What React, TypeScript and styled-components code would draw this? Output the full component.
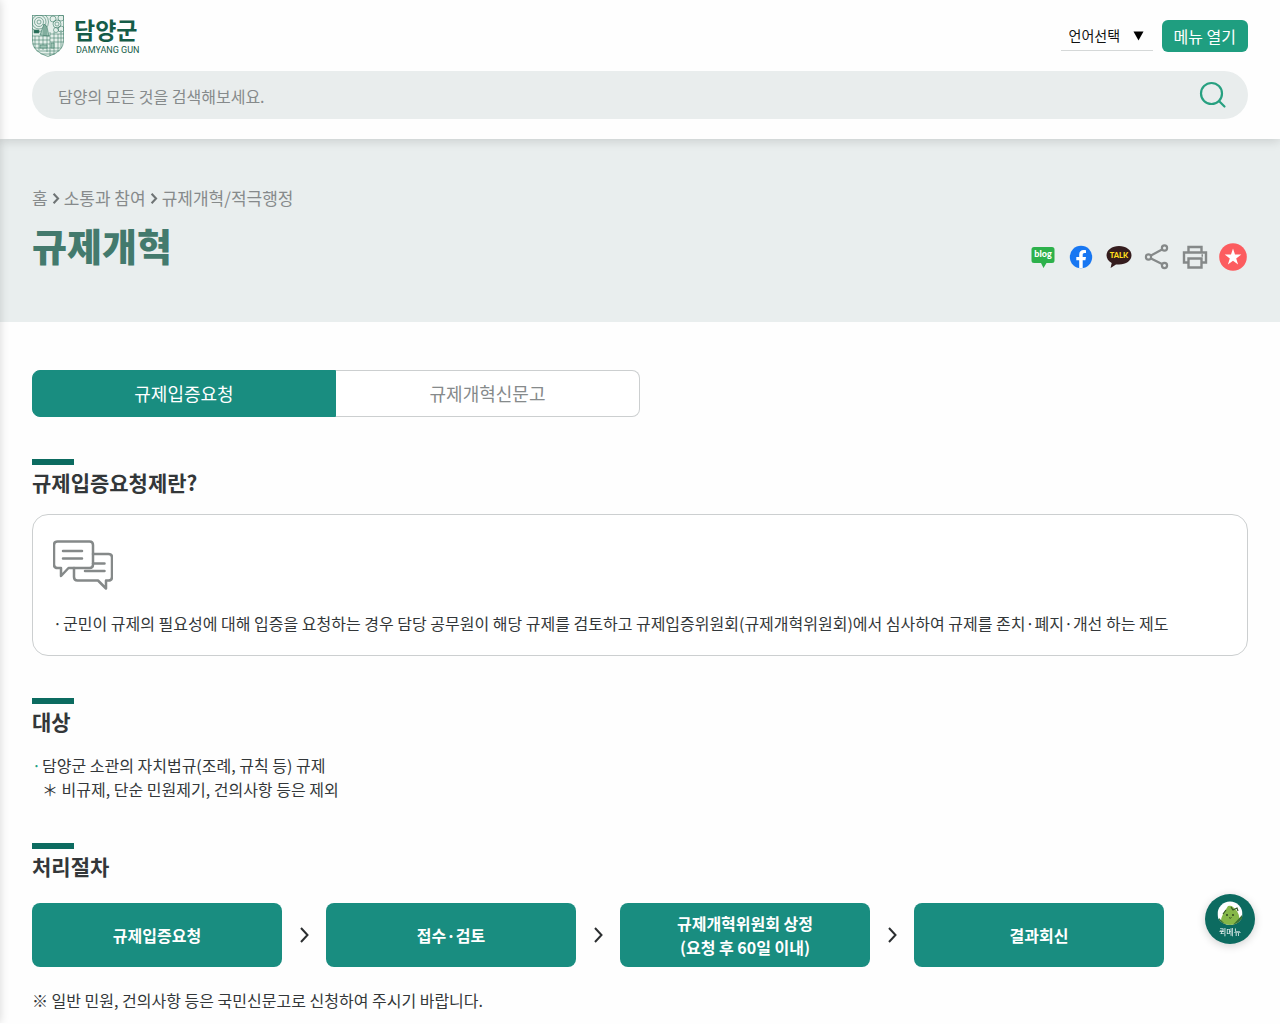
import React from "react";
import styled, { createGlobalStyle } from "styled-components";

const color = {
  teal: "#198d80",
  deep: "#0c6b60",
  button: "#1f9e80",
  mist: "#e9eeee",
  text: "#333739",
  muted: "#868a8b",
  line: "#cccfd0",
};

const GlobalStyle = createGlobalStyle`
  *, *::before, *::after { box-sizing: border-box; }
  body {
    margin: 0;
    background: #fefefe;
    color: ${color.text};
    font-family: "Noto Sans CJK KR", "Noto Sans", sans-serif;
    font-size: 16px;
    line-height: 24px;
  }
  h1, h2, p, ul, ol { margin: 0; padding: 0; }
  ul, ol { list-style: none; }
  a { color: inherit; text-decoration: none; }
  button, input, select { font-family: inherit; }
  svg { display: block; }
`;

const Page = styled.div`
  position: relative;
  overflow: hidden;
`;

const DrawerEdge = styled.div`
  position: absolute;
  z-index: 5;
  top: 0;
  bottom: 0;
  left: -10px;
  width: 10px;
  box-shadow: 0 0 10px rgba(0, 0, 0, 0.16);
`;

const Header = styled.header`
  position: relative;
  z-index: 2;
  display: flex;
  flex-direction: column;
  gap: 14px;
  padding: 15px 32px 20px;
  background: #fefefe;
  box-shadow: 0 2px 10px rgba(0, 0, 0, 0.14);
`;

const TopRow = styled.div`
  display: flex;
  align-items: center;
  justify-content: space-between;
`;

const Logo = styled.a`
  display: flex;
  align-items: center;
  gap: 10px;
  color: #155c48;
`;

const LogoText = styled.span`
  display: flex;
  flex-direction: column;
`;

const LogoName = styled.strong`
  font-size: 23px;
  line-height: 27px;
  font-weight: 700;
`;

const LogoLatin = styled.span`
  padding-left: 2px;
  font-family: Roboto, sans-serif;
  font-size: 9px;
  line-height: 14px;
`;

const Tools = styled.div`
  display: flex;
  align-items: center;
  gap: 9px;
`;

const LanguageBox = styled.label`
  display: grid;
  grid-template-columns: 1fr;
  align-items: center;
  width: 92px;
  height: 30px;
  border-bottom: 1px solid #d5d8d8;

  > * { grid-area: 1 / 1; }
  > svg { justify-self: end; margin-right: 9px; pointer-events: none; }
`;

const LanguageSelect = styled.select`
  appearance: none;
  width: 100%;
  padding: 0 8px 2px;
  border: 0;
  background: transparent;
  color: #111;
  font-size: 14px;
  line-height: 24px;
`;

const MenuButton = styled.button`
  height: 32px;
  padding: 0 12px;
  border: 0;
  border-radius: 6px;
  background: ${color.button};
  color: #fff;
  font-size: 16px;
  line-height: 24px;
`;

const SearchBar = styled.form`
  display: flex;
  align-items: center;
  height: 48px;
  padding: 0 21px 0 26px;
  border-radius: 24px;
  background: #e9eded;
`;

const SearchInput = styled.input`
  flex: 1;
  min-width: 0;
  padding: 2px 0 0;
  border: 0;
  outline: 0;
  background: transparent;
  color: ${color.text};
  font-size: 16px;
  line-height: 24px;

  &::placeholder { color: ${color.muted}; opacity: 1; }
`;

const IconButton = styled.button`
  display: grid;
  place-items: center;
  width: 28px;
  height: 28px;
  padding: 0;
  border: 0;
  background: transparent;
`;

const Banner = styled.div`
  padding: 47px 32px 51px;
  background: ${color.mist};
`;

const Breadcrumb = styled.nav`
  display: flex;
  align-items: center;
  gap: 4px;
  color: ${color.muted};
  font-size: 17px;
  line-height: 24px;
`;

const BannerRow = styled.div`
  display: flex;
  align-items: flex-end;
  justify-content: space-between;
  padding: 9px 1px 0 0;
`;

const PageTitle = styled.h1`
  color: #437a6d;
  font-size: 38px;
  line-height: 52px;
  font-weight: 900;
`;

const ShareList = styled.ul`
  display: flex;
  gap: 10px;
`;

const Main = styled.main`
  display: flex;
  flex-direction: column;
  gap: 42px;
  padding: 48px 32px 11px;
`;

const Tabs = styled.nav`
  display: grid;
  grid-template-columns: 1fr 1fr;
  width: 50%;
`;

const Tab = styled.a<{ $active?: boolean }>`
  padding: 10px 0 11px;
  border: 1px solid ${(p) => (p.$active ? color.teal : color.line)};
  border-left-width: ${(p) => (p.$active ? "1px" : "0")};
  border-radius: ${(p) => (p.$active ? "8px 0 0 8px" : "0 8px 8px 0")};
  background: ${(p) => (p.$active ? color.teal : "#fff")};
  color: ${(p) => (p.$active ? "#fff" : color.muted)};
  font-size: 18px;
  line-height: 24px;
  text-align: center;
`;

const SectionTitle = styled.h2`
  margin-bottom: 15px;
  font-size: 21px;
  line-height: 34px;
  font-weight: 700;

  &::before {
    content: "";
    display: block;
    width: 42px;
    height: 6px;
    background: ${color.deep};
  }
`;

const InfoBox = styled.div`
  display: flex;
  flex-direction: column;
  gap: 16px;
  padding: 20px;
  border: 1px solid ${color.line};
  border-radius: 16px;
  background: #fff;
`;

const BulletItem = styled.li<{ $dot?: string }>`
  display: flex;

  &::before {
    content: "·";
    flex: none;
    width: 10px;
    color: ${(p) => p.$dot || "inherit"};
  }
`;

const Steps = styled.ol`
  display: flex;
  align-items: center;
  padding-top: 5px;
`;

const Step = styled.li`
  display: flex;
  align-items: center;
`;

const StepCard = styled.div`
  display: grid;
  place-items: center;
  width: 250px;
  height: 64px;
  border-radius: 8px;
  background: ${color.teal};
  color: #fff;
  font-weight: 700;
  text-align: center;
`;

const StepArrow = styled.span`
  display: grid;
  place-items: center;
  width: 44px;
`;

const Note = styled.p`
  margin-top: 21px;
`;

const QuickMenu = styled.button`
  position: fixed;
  z-index: 6;
  top: 894px;
  right: 25px;
  display: flex;
  flex-direction: column;
  align-items: center;
  width: 50px;
  height: 50px;
  padding: 7px 0 0;
  border: 0;
  border-radius: 50%;
  background: ${color.deep};
  box-shadow: 0 2px 8px rgba(0, 0, 0, 0.18);
  color: #fff;
  font-size: 8px;
  line-height: 10px;
`;

const Shield = () => (
  <svg width="32" height="42" viewBox="0 0 32 42" fill="none" stroke="#3f7d6a" strokeWidth="0.6" aria-hidden="true">
    <clipPath id="shield">
      <path d="M0 0h32v26q0 11-16 16Q0 37 0 26z" />
    </clipPath>
    <g clipPath="url(#shield)">
      <path d="M0 0h32v42H0z" fill="#e4efea" stroke="none" />
      <circle cx="7" cy="7" r="2" /><circle cx="7" cy="7" r="4.5" /><circle cx="7" cy="7" r="7" /><circle cx="7" cy="7" r="9.5" />
      <circle cx="25" cy="9" r="2" /><circle cx="25" cy="9" r="4" /><circle cx="21" cy="4" r="3" /><circle cx="29" cy="3" r="3" /><circle cx="29" cy="14" r="3" /><circle cx="24" cy="15" r="2.5" />
      <path d="M8 20l4-11 3 3 2 9zM12 9v12M14 10v11" fill="#9fc3b5" />
      <path d="M2 15h5v3H2z" fill="#236a55" />
      <path d="M0 21h18M0 25h18M0 29h18M3 21v12M7 21v14M11 21v14M15 21v16M18 17v24M22 17v24M18 19h14M18 23h14M18 27h14M26 19v17M29 15v17M0 33h32M4 36h24M8 39h18" />
      <path d="M19 28h3v5h-3zM8 30h7v3H8z" fill="#9fc3b5" />
    </g>
    <path d="M.5.5h31V26q0 10.500-15.500 15.500Q.5 36.500.5 26z" />
  </svg>
);

const SearchIcon = () => (
  <svg width="28" height="28" viewBox="0 0 28 28" fill="none" stroke="#27a080" strokeWidth="2.2" strokeLinecap="round" aria-hidden="true">
    <circle cx="12.500" cy="12.500" r="10.500" />
    <path d="M20 20l5.500 5.500" />
  </svg>
);

const Chevron = ({ width, height, stroke, weight = 2 }: { width: number; height: number; stroke: string; weight?: number }) => (
  <svg width={width} height={height} viewBox="0 0 9 16" fill="none" stroke={stroke} strokeWidth={weight} aria-hidden="true">
    <path d="M1 1l6.500 7L1 15" />
  </svg>
);

const ChatIcon = () => (
  <svg width="60" height="60" viewBox="0 0 60 60" fill="none" stroke="#858989" strokeWidth="2.500" strokeLinecap="round" strokeLinejoin="round" aria-hidden="true">
    <path d="M4.500 6.500h32q3.500 0 3.500 3.500v19.500q0 3.500-3.500 3.500H15.500L8 41v-8H4.500Q1 33 1 29.500V10q0-3.500 3.500-3.500z" />
    <path d="M10 16h19M10 23.500h19" />
    <path d="M40 19h15.500q3.500 0 3.500 3.500v19.500q0 3.500-3.500 3.500H53v8L45 45.500H24.500Q21 45.500 21 42v-9M40 28.500h11.500M32 36h19.500" />
  </svg>
);

const BlogIcon = () => (
  <svg width="28" height="28" viewBox="0 0 28 28" aria-hidden="true">
    <path d="M5 4h18q2.500 0 2.500 2.500v11q0 2.500-2.500 2.500h-5.500L14.500 25l-2.500-5H5q-2.500 0-2.500-2.500v-11Q2.500 4 5 4z" fill="#2db14b" />
    <text x="14" y="14" textAnchor="middle" fontFamily="Lato, sans-serif" fontSize="9" fontWeight="900" fill="#fff">blog</text>
  </svg>
);

const FacebookIcon = () => (
  <svg width="28" height="28" viewBox="0 0 28 28" aria-hidden="true">
    <circle cx="14" cy="14" r="11.200" fill="#1877f2" />
    <path d="M12.200 25v-7.700H9.300V14h2.900v-2.500c0-3 1.800-4.500 4.400-4.500 1.200 0 2.400.2 2.400.2V10h-1.400c-1.400 0-1.900.8-1.900 1.700V14h3.300l-.6 3.300h-2.700V25z" fill="#fff" />
  </svg>
);

const TalkIcon = () => (
  <svg width="28" height="28" viewBox="0 0 28 28" aria-hidden="true">
    <path d="M14 3C7 3 1.500 7 1.500 12.300c0 3.200 2 6 5.200 7.700L5.600 25l5.400-3.600c1 .2 2 .2 3 .2 7 0 12.500-4 12.500-9.300S21 3 14 3z" fill="#351d1e" />
    <text x="14" y="15" textAnchor="middle" fontFamily="Lato, sans-serif" fontSize="7.500" fontWeight="900" fill="#ffdf1c">TALK</text>
  </svg>
);

const ShareIcon = () => (
  <svg width="28" height="28" viewBox="0 0 28 28" fill="none" stroke="#858989" strokeWidth="2.200" aria-hidden="true">
    <circle cx="5.500" cy="14" r="2.600" /><circle cx="21.500" cy="5" r="2.600" /><circle cx="21.500" cy="22.500" r="2.600" />
    <path d="M8 12.500l11-6M8 15.500l11 5.500" />
  </svg>
);

const PrintIcon = () => (
  <svg width="28" height="28" viewBox="0 0 28 28" fill="none" stroke="#858989" strokeWidth="2.400" aria-hidden="true">
    <path d="M7.500 9V4h13v5M7.500 19.500H3V9.500h22v10h-4.500" />
    <path d="M7.500 15.500h13v9h-13z" />
    <path d="M20.500 12.500h1.500" />
  </svg>
);

const StarIcon = () => (
  <svg width="28" height="28" viewBox="0 0 28 28" aria-hidden="true">
    <circle cx="14" cy="14" r="13.800" fill="#fc5c5f" />
    <path d="M14 5.500l2 6.100h6.300l-5.100 3.800 1.900 6.100-5.100-3.700-5.100 3.700 1.900-6.100-5.100-3.800H12z" fill="#fff" />
  </svg>
);

const Mascot = () => (
  <svg width="26" height="26" viewBox="0 0 26 26" aria-hidden="true">
    <clipPath id="face"><path d="M.5 0h25v17q-5 7-12.500 7T.5 17z" /></clipPath>
    <circle cx="13" cy="13" r="12.500" fill="#fff" clipPath="url(#face)" />
    <g clipPath="url(#face)">
      <path d="M4 26q-1-8 2-13l5-8q3-1 5 1l4 4q4 6 1 16z" fill="#86b748" />
      <path d="M2 17l9 9H2zM25 14l-11 12h11z" fill="#3b7134" />
      <path d="M14 6l2 3 4-2 1 3M6 13l3-4" fill="none" stroke="#355624" strokeWidth="1.200" />
      <circle cx="10" cy="14" r="0.900" fill="#26391c" /><circle cx="16" cy="14" r="0.900" fill="#26391c" />
      <path d="M12 16.500q1.200 1.500 2.500 0" fill="none" stroke="#26391c" strokeWidth="0.800" />
    </g>
  </svg>
);

const shares = [
  { name: "블로그", Icon: BlogIcon },
  { name: "페이스북", Icon: FacebookIcon },
  { name: "카카오톡", Icon: TalkIcon },
  { name: "공유", Icon: ShareIcon },
  { name: "인쇄", Icon: PrintIcon },
  { name: "즐겨찾기", Icon: StarIcon },
];

const steps = [["규제입증요청"], ["접수·검토"], ["규제개혁위원회 상정", "(요청 후 60일 이내)"], ["결과회신"]];

export default function App() {
  return (
    <Page>
      <GlobalStyle />
      <DrawerEdge />
      <Header>
        <TopRow>
          <Logo href="#home">
            <Shield />
            <LogoText>
              <LogoName>담양군</LogoName>
              <LogoLatin>DAMYANG GUN</LogoLatin>
            </LogoText>
          </Logo>
          <Tools>
            <LanguageBox>
              <LanguageSelect aria-label="언어선택">
                <option>언어선택</option>
              </LanguageSelect>
              <svg width="11" height="10" viewBox="0 0 11 10" aria-hidden="true"><path d="M0.500 0.500h10l-5 9z" fill="#000" /></svg>
            </LanguageBox>
            <MenuButton type="button">메뉴 열기</MenuButton>
          </Tools>
        </TopRow>
        <SearchBar role="search" onSubmit={(e) => e.preventDefault()}>
          <SearchInput type="text" aria-label="검색어" placeholder="담양의 모든 것을 검색해보세요." />
          <IconButton type="submit" aria-label="검색"><SearchIcon /></IconButton>
        </SearchBar>
      </Header>

      <Banner>
        <Breadcrumb aria-label="현재 위치">
          <a href="#home">홈</a>
          <Chevron width={8} height={11} stroke="#6f7475" weight={3} />
          <a href="#community">소통과 참여</a>
          <Chevron width={8} height={11} stroke="#6f7475" weight={3} />
          <a href="#reform">규제개혁/적극행정</a>
        </Breadcrumb>
        <BannerRow>
          <PageTitle>규제개혁</PageTitle>
          <ShareList>
            {shares.map(({ name, Icon }) => (
              <li key={name}>
                <IconButton type="button" aria-label={name}><Icon /></IconButton>
              </li>
            ))}
          </ShareList>
        </BannerRow>
      </Banner>

      <Main>
        <Tabs>
          <Tab href="#request" $active aria-current="page">규제입증요청</Tab>
          <Tab href="#report">규제개혁신문고</Tab>
        </Tabs>

        <section>
          <SectionTitle>규제입증요청제란?</SectionTitle>
          <InfoBox>
            <ChatIcon />
            <ul>
              <BulletItem>
                군민이 규제의 필요성에 대해 입증을 요청하는 경우 담당 공무원이 해당 규제를 검토하고 규제입증위원회(규제개혁위원회)에서 심사하여 규제를 존치·폐지·개선 하는 제도
              </BulletItem>
            </ul>
          </InfoBox>
        </section>

        <section>
          <SectionTitle>대상</SectionTitle>
          <ul>
            <BulletItem $dot="#27a080">
              <span>
                담양군 소관의 자치법규(조례, 규칙 등) 규제
                <br />
                ＊ 비규제, 단순 민원제기, 건의사항 등은 제외
              </span>
            </BulletItem>
          </ul>
        </section>

        <section>
          <SectionTitle>처리절차</SectionTitle>
          <Steps>
            {steps.map((lines, i) => (
              <Step key={lines[0]}>
                {i > 0 && <StepArrow><Chevron width={9} height={16} stroke="#2b2e30" weight={2} /></StepArrow>}
                <StepCard>
                  <span>
                    {lines.map((line, n) => (
                      <React.Fragment key={line}>{n > 0 && <br />}{line}</React.Fragment>
                    ))}
                  </span>
                </StepCard>
              </Step>
            ))}
          </Steps>
          <Note>※ 일반 민원, 건의사항 등은 국민신문고로 신청하여 주시기 바랍니다.</Note>
        </section>
      </Main>

      <QuickMenu type="button">
        <Mascot />
        퀵메뉴
      </QuickMenu>
    </Page>
  );
}
